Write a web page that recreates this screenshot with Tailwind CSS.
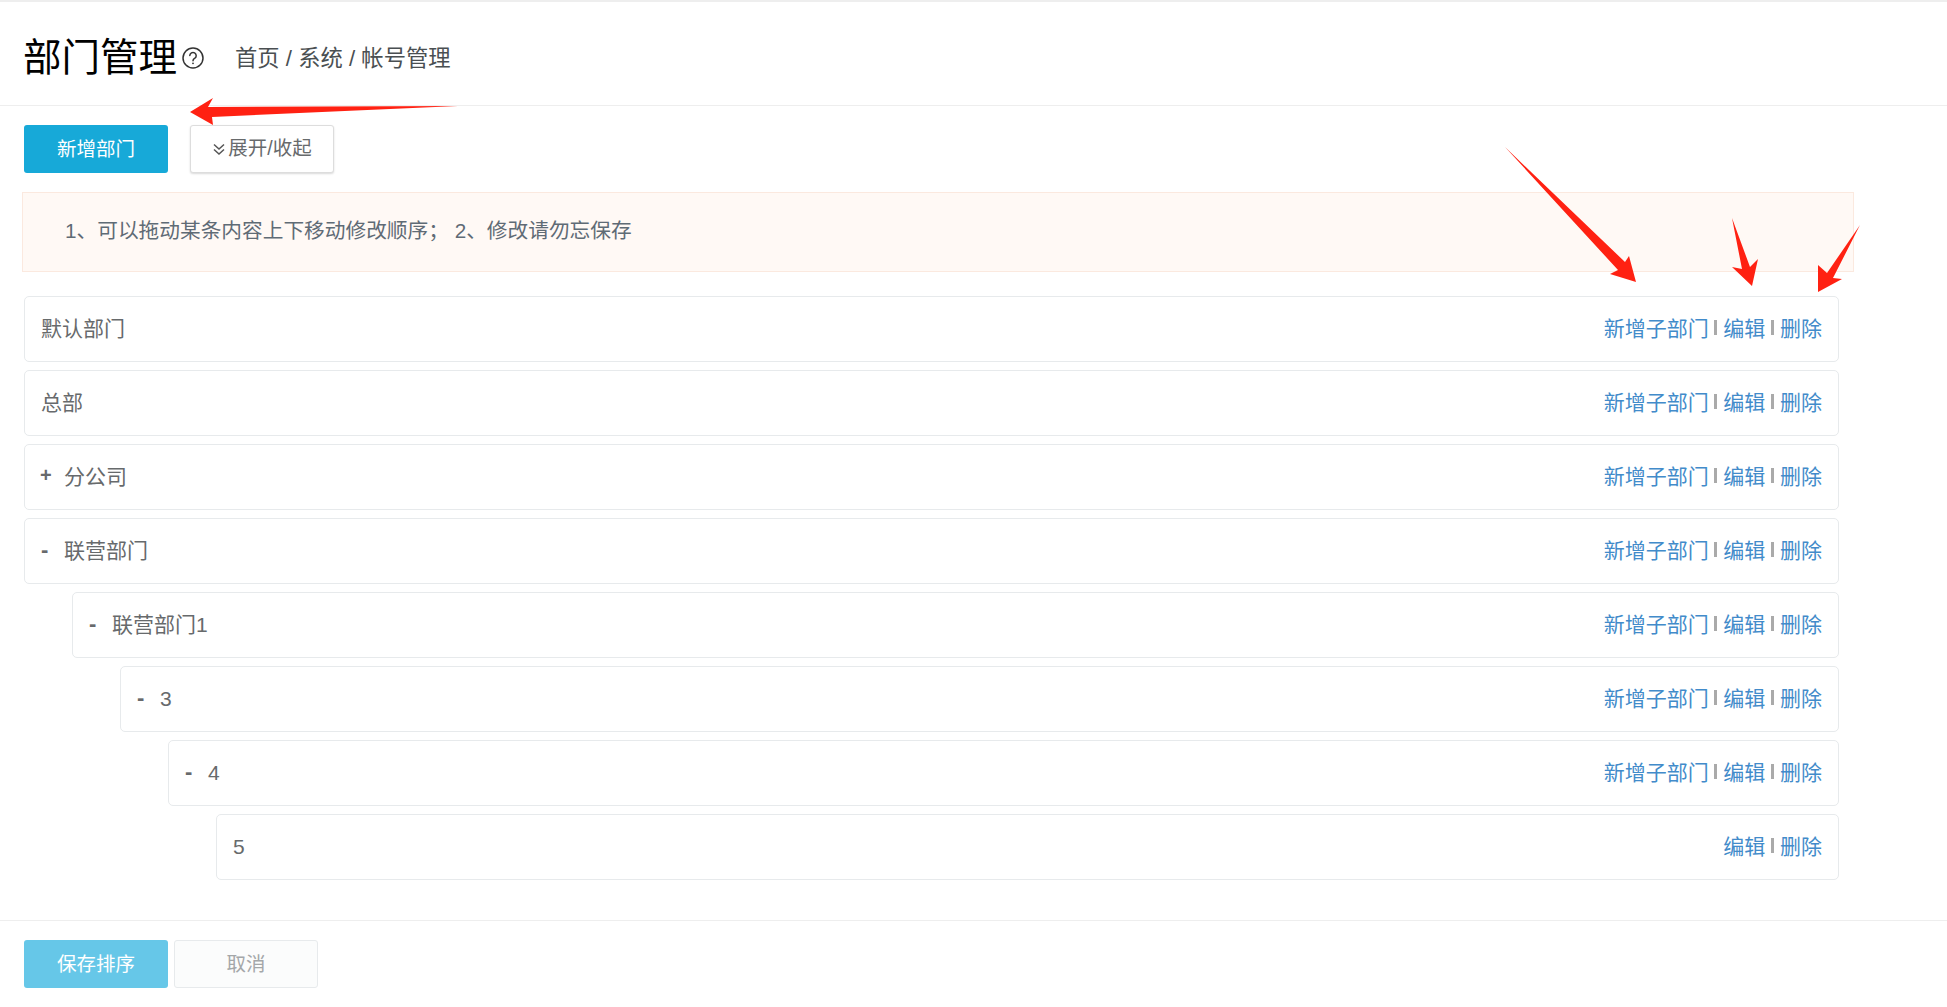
<!DOCTYPE html>
<html lang="zh">
<head>
<meta charset="utf-8">
<script src="https://cdn.jsdelivr.net/npm/@tailwindcss/browser@4"></script>
</head>
<body class="bg-white">
<div class="relative w-[1947px] h-[1007px] overflow-hidden flex flex-col border-t-2 border-[#eeeeee] font-['Liberation_Sans','Noto_Sans_CJK_SC',sans-serif] text-[#676a6c]">
  <header class="h-[104px] shrink-0 border-b border-[#eeeeee] flex items-center pl-6 pt-[10px]">
    <h1 class="text-[38.5px] leading-none text-black font-normal -ml-[1px]">部门管理</h1>
    <svg class="ml-[5px] -mt-[2px] w-[22px] h-[22px]" viewBox="0 0 22 22" fill="none" stroke="#333" stroke-width="1.5"><circle cx="11" cy="11" r="10"/><path d="M7.8 8.6a3.2 3.2 0 1 1 4.8 2.8c-1 .6-1.6 1.2-1.6 2.4" stroke-linecap="round"/><circle cx="11" cy="16.3" r=".9" fill="#333" stroke="none"/></svg>
    <nav class="ml-[31px] text-[22.3px] text-[#4a4f52]">首页 / 系统 / 帐号管理</nav>
  </header>

  <div class="flex gap-[22px] pl-6 pt-[19px] shrink-0">
    <button class="w-[144px] h-[48px] pt-[1px] rounded-[3px] bg-[#17a9d8] text-white text-[19.5px]">新增部门</button>
    <button class="w-[144px] h-[48px] rounded-[3px] bg-white border border-[#dddddd] shadow-[0_1px_2px_rgba(0,0,0,0.15)] text-[19.5px] text-[#676a6c] flex items-center justify-center gap-[2px]">
      <svg class="w-[14px] h-[14px]" viewBox="0 0 14 14" fill="none" stroke="#555" stroke-width="1.5"><path d="M2 2.5l5 4.5 5-4.5M2 7.5l5 4.5 5-4.5"/></svg>展开/收起
    </button>
  </div>

  <div class="ml-[22px] mt-[19px] w-[1832px] h-[80px] shrink-0 bg-[#fff9f5] border border-[#fbe9df] flex items-center pl-[42px] pb-[2px] text-[20.7px] text-[#5f6b75]">1、可以拖动某条内容上下移动修改顺序；&nbsp;2、修改请勿忘保存</div>

  <ul class="mt-[24px] flex flex-col gap-[8px] shrink-0 text-[21px]">
    <li class="ml-6 w-[1815px] h-[66px] border border-[#e7eaec] rounded-[5px] flex items-center justify-between px-4"><span>默认部门</span><span class="text-[#428bca]">新增子部门 <i class="inline-block w-[3px] h-[15px] bg-[#aaaaaa] align-[1px]"></i> 编辑 <i class="inline-block w-[3px] h-[15px] bg-[#aaaaaa] align-[1px]"></i> 删除</span></li>
    <li class="ml-6 w-[1815px] h-[66px] border border-[#e7eaec] rounded-[5px] flex items-center justify-between px-4"><span>总部</span><span class="text-[#428bca]">新增子部门 <i class="inline-block w-[3px] h-[15px] bg-[#aaaaaa] align-[1px]"></i> 编辑 <i class="inline-block w-[3px] h-[15px] bg-[#aaaaaa] align-[1px]"></i> 删除</span></li>
    <li class="ml-6 w-[1815px] h-[66px] border border-[#e7eaec] rounded-[5px] flex items-center justify-between px-4"><span class="flex items-center"><b class="w-[23px] text-[20px] -ml-[1px] mr-[1px] -mt-[5px] font-extrabold">+</b>分公司</span><span class="text-[#428bca]">新增子部门 <i class="inline-block w-[3px] h-[15px] bg-[#aaaaaa] align-[1px]"></i> 编辑 <i class="inline-block w-[3px] h-[15px] bg-[#aaaaaa] align-[1px]"></i> 删除</span></li>
    <li class="ml-6 w-[1815px] h-[66px] border border-[#e7eaec] rounded-[5px] flex items-center justify-between px-4"><span class="flex items-center"><b class="w-[23px] text-[22px] -mt-[3px] font-extrabold">-</b>联营部门</span><span class="text-[#428bca]">新增子部门 <i class="inline-block w-[3px] h-[15px] bg-[#aaaaaa] align-[1px]"></i> 编辑 <i class="inline-block w-[3px] h-[15px] bg-[#aaaaaa] align-[1px]"></i> 删除</span></li>
    <li class="ml-[72px] w-[1767px] h-[66px] border border-[#e7eaec] rounded-[5px] flex items-center justify-between px-4"><span class="flex items-center"><b class="w-[23px] text-[22px] -mt-[3px] font-extrabold">-</b>联营部门1</span><span class="text-[#428bca]">新增子部门 <i class="inline-block w-[3px] h-[15px] bg-[#aaaaaa] align-[1px]"></i> 编辑 <i class="inline-block w-[3px] h-[15px] bg-[#aaaaaa] align-[1px]"></i> 删除</span></li>
    <li class="ml-[120px] w-[1719px] h-[66px] border border-[#e7eaec] rounded-[5px] flex items-center justify-between px-4"><span class="flex items-center"><b class="w-[23px] text-[22px] -mt-[3px] font-extrabold">-</b>3</span><span class="text-[#428bca]">新增子部门 <i class="inline-block w-[3px] h-[15px] bg-[#aaaaaa] align-[1px]"></i> 编辑 <i class="inline-block w-[3px] h-[15px] bg-[#aaaaaa] align-[1px]"></i> 删除</span></li>
    <li class="ml-[168px] w-[1671px] h-[66px] border border-[#e7eaec] rounded-[5px] flex items-center justify-between px-4"><span class="flex items-center"><b class="w-[23px] text-[22px] -mt-[3px] font-extrabold">-</b>4</span><span class="text-[#428bca]">新增子部门 <i class="inline-block w-[3px] h-[15px] bg-[#aaaaaa] align-[1px]"></i> 编辑 <i class="inline-block w-[3px] h-[15px] bg-[#aaaaaa] align-[1px]"></i> 删除</span></li>
    <li class="ml-[216px] w-[1623px] h-[66px] border border-[#e7eaec] rounded-[5px] flex items-center justify-between px-4"><span>5</span><span class="text-[#428bca]">编辑 <i class="inline-block w-[3px] h-[15px] bg-[#aaaaaa] align-[1px]"></i> 删除</span></li>
  </ul>

  <footer class="mt-[40px] border-t border-[#eeeeee] pt-[19px] pl-6 flex gap-[6px] shrink-0">
    <button class="w-[144px] h-[48px] pt-[1px] rounded-[3px] bg-[#66c7e8] text-white text-[19.5px]">保存排序</button>
    <button class="w-[144px] h-[48px] pt-[1px] rounded-[3px] bg-[#fbfcfc] border border-[#e7eaec] text-[#a4a7a9] text-[19.5px]">取消</button>
  </footer>

  <svg class="absolute left-0 -top-[2px] pointer-events-none" width="1947" height="1007" viewBox="0 0 1947 1007" fill="#ff2112">
    <polygon points="190,112 213,98 208,107 458,106 212,117 213,125"/>
    <polygon points="1505,147 1625,262 1629,256 1636,282 1610,274 1618,270"/>
    <polygon points="1732,218 1750,267 1758,259 1752,286 1732,267 1742,269"/>
    <polygon points="1860,225 1833,278 1842,279 1818,292 1818,265 1827,273"/>
  </svg>
</div>
</body>
</html>
